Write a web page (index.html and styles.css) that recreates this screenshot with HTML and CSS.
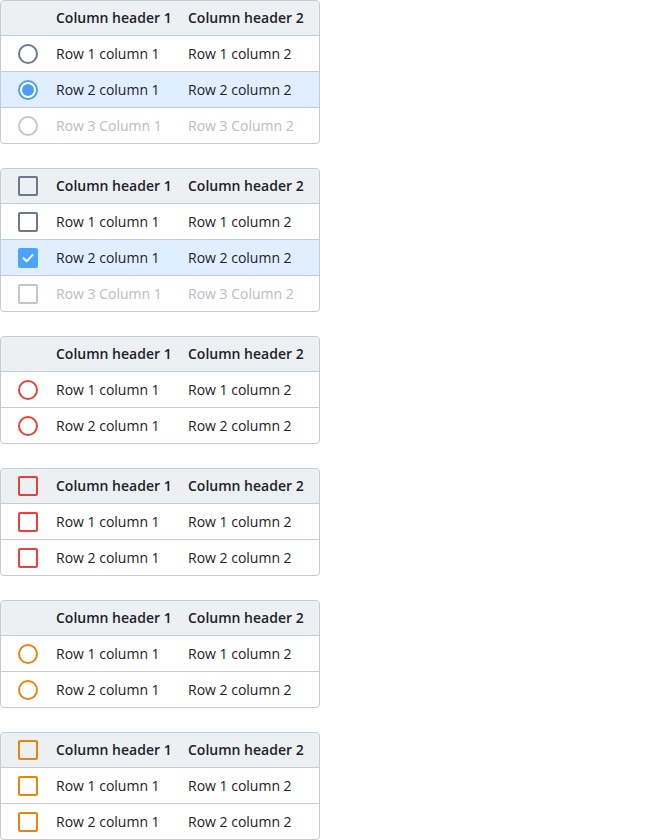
FILE: index.html
```html
<!DOCTYPE html>
<html>
<head>
<meta charset="utf-8">
<link rel="stylesheet" href="styles.css">
</head>
<body>
<div class="stack">

  <div class="table">
    <div class="row head"><div class="sel"></div><div class="cell">Column header 1</div><div class="cell">Column header 2</div></div>
    <div class="row"><div class="sel"><span class="radio"></span></div><div class="cell">Row 1 column 1</div><div class="cell">Row 1 column 2</div></div>
    <div class="row selected"><div class="sel"><span class="radio checked"></span></div><div class="cell">Row 2 column 1</div><div class="cell">Row 2 column 2</div></div>
    <div class="row disabled"><div class="sel"><span class="radio"></span></div><div class="cell">Row 3 Column 1</div><div class="cell">Row 3 Column 2</div></div>
  </div>

  <div class="table">
    <div class="row head"><div class="sel"><span class="box"></span></div><div class="cell">Column header 1</div><div class="cell">Column header 2</div></div>
    <div class="row"><div class="sel"><span class="box"></span></div><div class="cell">Row 1 column 1</div><div class="cell">Row 1 column 2</div></div>
    <div class="row selected"><div class="sel"><span class="box checked"><svg viewBox="0 0 20 20" width="20" height="20"><path d="M5.5 10.3 L8.7 13.3 L14.6 6.9" fill="none" stroke="#fff" stroke-width="1.9" stroke-linecap="round" stroke-linejoin="round"/></svg></span></div><div class="cell">Row 2 column 1</div><div class="cell">Row 2 column 2</div></div>
    <div class="row disabled"><div class="sel"><span class="box"></span></div><div class="cell">Row 3 Column 1</div><div class="cell">Row 3 Column 2</div></div>
  </div>

  <div class="table error">
    <div class="row head"><div class="sel"></div><div class="cell">Column header 1</div><div class="cell">Column header 2</div></div>
    <div class="row"><div class="sel"><span class="radio"></span></div><div class="cell">Row 1 column 1</div><div class="cell">Row 1 column 2</div></div>
    <div class="row"><div class="sel"><span class="radio"></span></div><div class="cell">Row 2 column 1</div><div class="cell">Row 2 column 2</div></div>
  </div>

  <div class="table error">
    <div class="row head"><div class="sel"><span class="box"></span></div><div class="cell">Column header 1</div><div class="cell">Column header 2</div></div>
    <div class="row"><div class="sel"><span class="box"></span></div><div class="cell">Row 1 column 1</div><div class="cell">Row 1 column 2</div></div>
    <div class="row"><div class="sel"><span class="box"></span></div><div class="cell">Row 2 column 1</div><div class="cell">Row 2 column 2</div></div>
  </div>

  <div class="table warning">
    <div class="row head"><div class="sel"></div><div class="cell">Column header 1</div><div class="cell">Column header 2</div></div>
    <div class="row"><div class="sel"><span class="radio"></span></div><div class="cell">Row 1 column 1</div><div class="cell">Row 1 column 2</div></div>
    <div class="row"><div class="sel"><span class="radio"></span></div><div class="cell">Row 2 column 1</div><div class="cell">Row 2 column 2</div></div>
  </div>

  <div class="table warning">
    <div class="row head"><div class="sel"><span class="box"></span></div><div class="cell">Column header 1</div><div class="cell">Column header 2</div></div>
    <div class="row"><div class="sel"><span class="box"></span></div><div class="cell">Row 1 column 1</div><div class="cell">Row 1 column 2</div></div>
    <div class="row"><div class="sel"><span class="box"></span></div><div class="cell">Row 2 column 1</div><div class="cell">Row 2 column 2</div></div>
  </div>

</div>
</body>
</html>
```

FILE: styles.css
```css
* { box-sizing: border-box; }
html, body { margin: 0; padding: 0; background: #fff; }
body {
  font-family: "Open Sans", "Noto Sans", sans-serif;
  font-size: 14px;
  color: #1c2128;
}
.stack {
  display: flex;
  flex-direction: column;
  gap: 24px;
  width: 320px;
}
.table {
  border: 1px solid #c6cbd1;
  border-radius: 4px;
  overflow: hidden;
}
.row {
  display: grid;
  grid-template-columns: 55px 132px 1fr;
  align-items: center;
  height: 36px;
  border-top: 1px solid #c6cbd1;
}
.row.head {
  height: 34px;
  border-top: none;
  background: #edf0f3;
  font-weight: 600;
}
.row.head .cell { padding-bottom: 2px; }
.row.selected { background: #e0efff; }
.row.disabled { color: #b9bdc2; }
.sel {
  display: flex;
  align-items: center;
  padding-left: 17px;
}
.radio {
  width: 20px;
  height: 20px;
  border-radius: 50%;
  border: 2px solid #6d7888;
  background: #fff;
  position: relative;
}
.radio.checked {
  border-color: #4a9ff5;
}
.radio.checked::after {
  content: "";
  position: absolute;
  left: 2px;
  top: 2px;
  width: 12px;
  height: 12px;
  border-radius: 50%;
  background: #4a9ff5;
}
.box {
  width: 20px;
  height: 20px;
  border-radius: 2px;
  border: 2px solid #6d7888;
  background: transparent;
  display: block;
}
.box.checked {
  border: none;
  background: #4da3fb;
}
.box.checked svg { display: block; }
.disabled .radio, .disabled .box { border-color: #c2c6cb; }
.error .radio, .error .box { border-color: #e8403a; }
.warning .radio, .warning .box { border-color: #e8850f; }
```
